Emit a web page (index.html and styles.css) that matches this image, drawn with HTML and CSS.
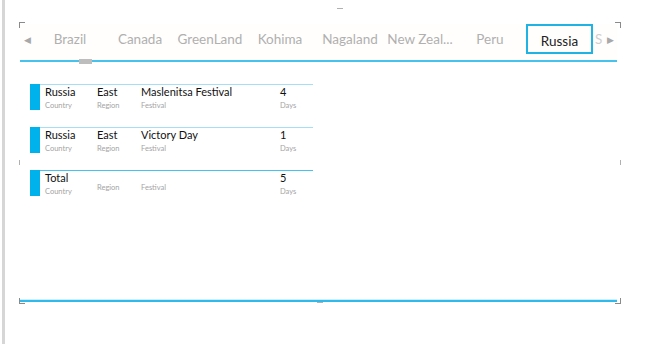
FILE: index.html
```html
<!DOCTYPE html>
<html lang="en">
<head>
  <meta charset="UTF-8">
  <title>Festivals</title>
  <link rel="stylesheet" href="styles.css">
</head>
<body>
  <div id="page">
    <div id="frame">
      <span class="mark tl"></span>
      <span class="mark tr"></span>
      <span class="mark bl"></span>
      <span class="mark br"></span>
      <span class="tick top"></span>
      <span class="tick bottom"></span>
      <span class="tick left"></span>
      <span class="tick right"></span>

      <div id="tabs">
        <span class="arrow">&#9664;</span>
        <div class="tab-list">
          <div class="tab">Brazil</div>
          <div class="tab">Canada</div>
          <div class="tab">GreenLand</div>
          <div class="tab">Kohima</div>
          <div class="tab">Nagaland</div>
          <div class="tab">New Zeal...</div>
          <div class="tab">Peru</div>
          <div class="tab selected">Russia</div>
          <div class="tab cut">S</div>
        </div>
        <span class="arrow right">&#9654;</span>
        <span id="thumb"></span>
      </div>

      <div id="rows">
        <div class="row">
          <div class="bar"></div>
          <div class="cell c1"><div class="val">Russia</div><div class="lbl">Country</div></div>
          <div class="cell c2"><div class="val">East</div><div class="lbl">Region</div></div>
          <div class="cell c3"><div class="val">Maslenitsa Festival</div><div class="lbl">Festival</div></div>
          <div class="cell c4"><div class="val">4</div><div class="lbl">Days</div></div>
        </div>
        <div class="row">
          <div class="bar"></div>
          <div class="cell c1"><div class="val">Russia</div><div class="lbl">Country</div></div>
          <div class="cell c2"><div class="val">East</div><div class="lbl">Region</div></div>
          <div class="cell c3"><div class="val">Victory Day</div><div class="lbl">Festival</div></div>
          <div class="cell c4"><div class="val">1</div><div class="lbl">Days</div></div>
        </div>
        <div class="row total">
          <div class="bar"></div>
          <div class="cell c1"><div class="val">Total</div><div class="lbl">Country</div></div>
          <div class="cell c2 empty"><div class="lbl">Region</div></div>
          <div class="cell c3 empty"><div class="lbl">Festival</div></div>
          <div class="cell c4"><div class="val">5</div><div class="lbl">Days</div></div>
        </div>
      </div>

      <div id="footer-line"></div>
    </div>
  </div>
</body>
</html>
```

FILE: styles.css
```css
html, body {
  margin: 0;
  padding: 0;
  background: #fff;
  font-family: Lato, "Liberation Sans", sans-serif;
  overflow: hidden;
}

#page {
  height: 344px;
  margin-left: 2px;
  border-left: 3px solid #d6d6d6;
  padding-top: 22px;
  box-sizing: border-box;
}

#frame {
  position: relative;
  width: 602px;
  height: 282px;
  margin-left: 14px;
  display: flex;
  flex-direction: column;
}

/* corner and edge marks */
.mark {
  position: absolute;
  width: 5px;
  height: 5px;
  border: 0 solid #8a8a8a;
}
.mark.tl { top: 0; left: 0; border-top-width: 1px; border-left-width: 1px; }
.mark.tr { top: 0; right: 0; border-top-width: 1px; border-right-width: 1px; }
.mark.bl { bottom: 0; left: 0; border-bottom-width: 1px; border-left-width: 1px; }
.mark.br { bottom: 0; right: 0; border-bottom-width: 1px; border-right-width: 1px; }

.tick {
  position: absolute;
  background: #b0b0b0;
}
.tick.top { top: -14px; left: 318px; width: 6px; height: 1px; }
.tick.bottom { bottom: 1px; left: 298px; width: 6px; height: 1px; }
.tick.left { top: 138px; left: 0; width: 1px; height: 5px; }
.tick.right { top: 138px; right: 0; width: 1px; height: 5px; }

#tabs {
  position: relative;
  display: flex;
  align-items: center;
  height: 30px;
  margin: 2px 4px 0 1px;
  padding-bottom: 6px;
  border-bottom: 2px solid #45c2ee;
  background: #fffefc;
}

.arrow {
  width: 15px;
  flex: none;
  text-align: center;
  font-size: 9px;
  color: #a8a8a8;
}
.arrow.right {
  width: 10px;
  text-align: left;
}

.tab-list {
  display: flex;
  flex: 1;
  overflow: hidden;
  height: 30px;
}

.tab {
  flex: none;
  width: 70px;
  height: 30px;
  line-height: 30px;
  text-align: center;
  font-size: 13.5px;
  color: #b0b0b0;
  box-sizing: border-box;
  white-space: nowrap;
}

.tab.selected {
  border: 2px solid #1fb3e3;
  color: #222;
  width: 67px;
  margin: 0 2px 0 1px;
}

.tab.cut {
  width: 10px;
  text-align: left;
  color: #cfcfcf;
}

#thumb {
  position: absolute;
  left: 59px;
  bottom: -4px;
  width: 13px;
  height: 5px;
  background: #bdbdbd;
}

#rows {
  flex: 1;
  display: flex;
  flex-direction: column;
  gap: 17px;
  padding: 22px 0 0 11px;
}

.row {
  display: flex;
  width: 283px;
  height: 26px;
}

.bar {
  width: 10px;
  flex: none;
  background: #00b2ec;
}

.cell {
  border-top: 1px solid #a6def3;
  padding-top: 1px;
}
.c1 { width: 52px; padding-left: 5px; }
.c2 { width: 44px; }
.c3 { width: 139px; }
.c4 { flex: 1; }

.row.total .cell { border-top-color: #45c2ee; }

.val {
  font-size: 11px;
  line-height: 12px;
  color: #111;
  white-space: nowrap;
}

.lbl {
  margin-top: 3px;
  font-size: 7.5px;
  line-height: 10px;
  color: #a4a4a4;
}

.cell.empty { padding-top: 9px; }

#footer-line {
  height: 2px;
  margin: 0 4px 2px 1px;
  background: #2fb9ec;
  box-shadow: 0 -1px 0 #cdeefa;
}
```
